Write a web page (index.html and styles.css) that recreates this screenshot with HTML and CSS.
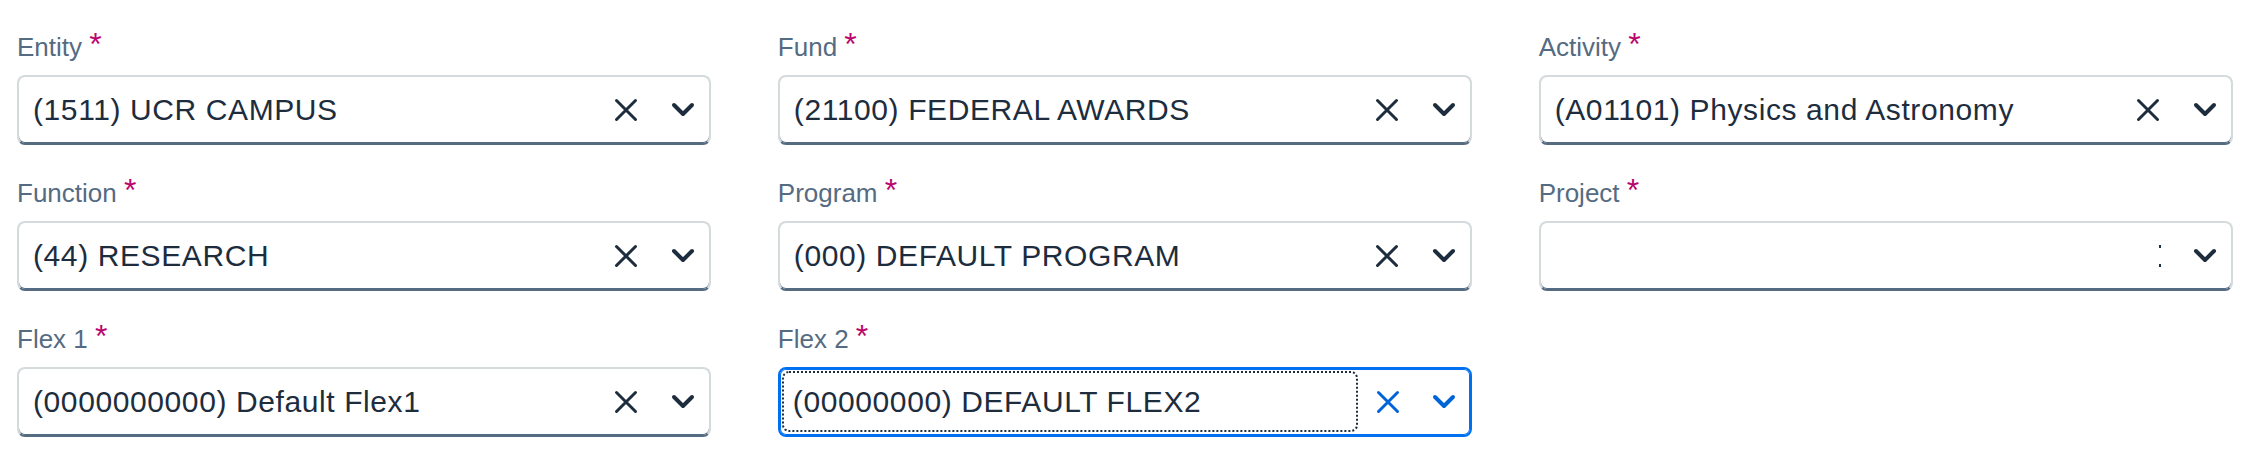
FILE: index.html
```html
<!DOCTYPE html>
<html lang="en">
<head>
    <meta charset="UTF-8">
    <title>Chart of Accounts</title>
    <link rel="stylesheet" href="styles.css">
</head>
<body>

    <div class="form-grid">

        <div class="field">
            <label class="field-label">Entity <span class="req">*</span></label>
            <div class="combo">
                <span class="combo-value">(1511) UCR CAMPUS</span>
                <span class="icon-cell clear">
                    <svg width="24" height="24" viewBox="0 0 24 24"><path d="M2.5 2.5 L21.5 21.5 M21.5 2.5 L2.5 21.5"/></svg>
                </span>
                <span class="icon-cell arrow">
                    <svg width="24" height="16" viewBox="0 0 24 16"><path d="M3 3 L12 12 L21 3"/></svg>
                </span>
            </div>
        </div>

        <div class="field">
            <label class="field-label">Fund <span class="req">*</span></label>
            <div class="combo">
                <span class="combo-value">(21100) FEDERAL AWARDS</span>
                <span class="icon-cell clear">
                    <svg width="24" height="24" viewBox="0 0 24 24"><path d="M2.5 2.5 L21.5 21.5 M21.5 2.5 L2.5 21.5"/></svg>
                </span>
                <span class="icon-cell arrow">
                    <svg width="24" height="16" viewBox="0 0 24 16"><path d="M3 3 L12 12 L21 3"/></svg>
                </span>
            </div>
        </div>

        <div class="field">
            <label class="field-label">Activity <span class="req">*</span></label>
            <div class="combo">
                <span class="combo-value">(A01101) Physics and Astronomy</span>
                <span class="icon-cell clear">
                    <svg width="24" height="24" viewBox="0 0 24 24"><path d="M2.5 2.5 L21.5 21.5 M21.5 2.5 L2.5 21.5"/></svg>
                </span>
                <span class="icon-cell arrow">
                    <svg width="24" height="16" viewBox="0 0 24 16"><path d="M3 3 L12 12 L21 3"/></svg>
                </span>
            </div>
        </div>

        <div class="field">
            <label class="field-label">Function <span class="req">*</span></label>
            <div class="combo">
                <span class="combo-value">(44) RESEARCH</span>
                <span class="icon-cell clear">
                    <svg width="24" height="24" viewBox="0 0 24 24"><path d="M2.5 2.5 L21.5 21.5 M21.5 2.5 L2.5 21.5"/></svg>
                </span>
                <span class="icon-cell arrow">
                    <svg width="24" height="16" viewBox="0 0 24 16"><path d="M3 3 L12 12 L21 3"/></svg>
                </span>
            </div>
        </div>

        <div class="field">
            <label class="field-label">Program <span class="req">*</span></label>
            <div class="combo">
                <span class="combo-value">(000) DEFAULT PROGRAM</span>
                <span class="icon-cell clear">
                    <svg width="24" height="24" viewBox="0 0 24 24"><path d="M2.5 2.5 L21.5 21.5 M21.5 2.5 L2.5 21.5"/></svg>
                </span>
                <span class="icon-cell arrow">
                    <svg width="24" height="16" viewBox="0 0 24 16"><path d="M3 3 L12 12 L21 3"/></svg>
                </span>
            </div>
        </div>

        <div class="field">
            <label class="field-label">Project <span class="req">*</span></label>
            <div class="combo">
                <span class="combo-value"></span>
                <span class="icon-cell clear empty">
                    <span class="caret-mark"></span>
                </span>
                <span class="icon-cell arrow">
                    <svg width="24" height="16" viewBox="0 0 24 16"><path d="M3 3 L12 12 L21 3"/></svg>
                </span>
            </div>
        </div>

        <div class="field">
            <label class="field-label">Flex 1 <span class="req">*</span></label>
            <div class="combo">
                <span class="combo-value">(0000000000) Default Flex1</span>
                <span class="icon-cell clear">
                    <svg width="24" height="24" viewBox="0 0 24 24"><path d="M2.5 2.5 L21.5 21.5 M21.5 2.5 L2.5 21.5"/></svg>
                </span>
                <span class="icon-cell arrow">
                    <svg width="24" height="16" viewBox="0 0 24 16"><path d="M3 3 L12 12 L21 3"/></svg>
                </span>
            </div>
        </div>

        <div class="field">
            <label class="field-label">Flex 2 <span class="req">*</span></label>
            <div class="combo focused">
                <span class="combo-value">(00000000) DEFAULT FLEX2</span>
                <span class="icon-cell clear">
                    <svg width="24" height="24" viewBox="0 0 24 24"><path d="M2.5 2.5 L21.5 21.5 M21.5 2.5 L2.5 21.5"/></svg>
                </span>
                <span class="icon-cell arrow">
                    <svg width="24" height="16" viewBox="0 0 24 16"><path d="M3 3 L12 12 L21 3"/></svg>
                </span>
            </div>
        </div>

    </div>

</body>
</html>
```

FILE: styles.css
```css
/* Basic reset */
* {
    margin: 0;
    padding: 0;
    box-sizing: border-box;
}

body {
    font-family: "Liberation Sans", Arial, sans-serif;
    background-color: #fff;
    color: #1d2d3e;
}

/* Three column form */
.form-grid {
    display: grid;
    grid-template-columns: repeat(3, 1fr);
    column-gap: 66.5px;
    row-gap: 30px;
    padding: 29px 23px 0 17px;
}

.field {
    display: flex;
    flex-direction: column;
    gap: 10px;
}

.field-label {
    font-size: 26px;
    line-height: 36px;
    color: #556b82;
}

.req {
    color: #ba066c;
    font-size: 32px;
    line-height: 0;
    vertical-align: 1px;
}

/* Combo box */
.combo {
    display: flex;
    align-items: center;
    height: 70px;
    border: 2px solid #d5dadd;
    border-bottom-color: #556b81;
    border-radius: 8px;
    box-shadow: inset 0 -1px 0 #556b81;
    background-color: #fff;
}

.combo-value {
    flex: 1;
    align-self: stretch;
    display: flex;
    align-items: center;
    padding-left: 14px;
    font-size: 30px;
    letter-spacing: 0.6px;
    white-space: nowrap;
    overflow: hidden;
}

.icon-cell {
    display: flex;
    align-items: center;
    justify-content: center;
    height: 100%;
}

.icon-cell svg path {
    fill: none;
    stroke: #1d2d3e;
    stroke-linecap: round;
    stroke-linejoin: round;
}

.clear {
    width: 62px;
}

.clear svg path {
    stroke-width: 3;
}

.arrow {
    width: 52px;
}

.arrow svg path {
    stroke-width: 4;
}

.clear.empty {
    justify-content: flex-end;
    padding-right: 18px;
}

.caret-mark {
    width: 2px;
    height: 22px;
    background: linear-gradient(#1d2d3e 0 3px, transparent 3px 19px, #1d2d3e 19px);
}

/* Focused state */
.combo.focused {
    border: 2px solid #0070f2;
    box-shadow: inset 0 0 0 1px #0070f2;
}

.combo.focused .combo-value {
    margin: 2px 0 3px 2px;
    border: 2px dotted #1d2d3e;
    border-radius: 7px;
    padding-left: 9px;
}

.combo.focused .clear {
    width: 60px;
}

.combo.focused .icon-cell svg path {
    stroke: #0064d9;
}
```
